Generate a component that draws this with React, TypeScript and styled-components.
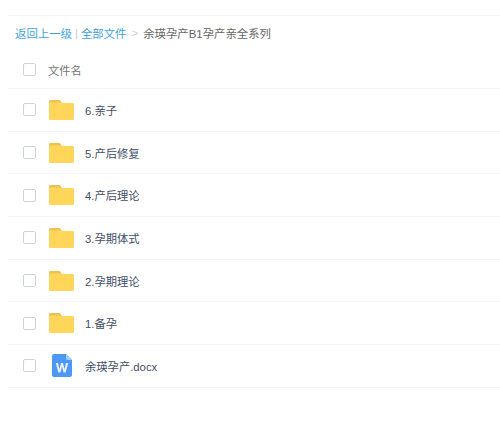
import React from 'react';
import styled, { createGlobalStyle } from 'styled-components';

const GlobalStyle = createGlobalStyle`
  html, body {
    margin: 0;
    padding: 0;
    background: #fff;
    font-family: "Liberation Sans", "Noto Sans CJK SC", sans-serif;
  }
`;

const Page = styled.div`
  width: 500px;
  height: 429px;
  overflow: hidden;
  padding: 15px 0 0 8px;
  box-sizing: border-box;
`;

const Crumbs = styled.div`
  height: 36px;
  box-sizing: border-box;
  border-top: 1px solid #f2f4f7;
  display: flex;
  align-items: center;
  padding: 0 0 2px 7px;
  font-size: 11.4px;
  color: #666;
  white-space: nowrap;
`;

const CrumbLink = styled.span`
  color: #3fa3da;
`;

const Divider = styled.span<{ $gap: number }>`
  color: #c5d0da;
  margin: 0 ${p => p.$gap}px;
`;

const Row = styled.div<{ $height: number }>`
  height: ${p => p.$height}px;
  box-sizing: border-box;
  border-bottom: 1px solid #f2f4f7;
  display: flex;
  align-items: center;
  padding-left: 15px;
`;

const Check = styled.span`
  width: 13px;
  height: 13px;
  box-sizing: border-box;
  border: 1px solid #cfd3da;
  border-radius: 2px;
  background: #fff;
  flex: none;
`;

const HeadLabel = styled.span`
  margin-left: 12px;
  font-size: 11.2px;
  color: #777;
`;

const IconSlot = styled.span`
  width: 25px;
  height: 23px;
  margin-left: 13px;
  flex: none;
  display: flex;
  justify-content: center;
  align-items: center;
`;

const Name = styled.span`
  margin-left: 11px;
  font-size: 11.3px;
  color: #424e67;
`;

const FolderIcon = () => (
  <svg width="25" height="20" viewBox="0 0 25 20">
    <path d="M1.500 0H9.500c1 0 1.500 .5 2 1.200L13 3H23.500A1.500 1.500 0 0 1 25 4.500V18.500A1.500 1.500 0 0 1 23.500 20H1.500A1.500 1.500 0 0 1 0 18.500V1.500A1.500 1.500 0 0 1 1.500 0Z" fill="#ffd659" />
    <path d="M1.500 0H9.500c1 0 1.500 .5 2 1.200L12.500 2.400H0V1.500A1.500 1.500 0 0 1 1.500 0Z" fill="#ecc155" />
  </svg>
);

const DocIcon = () => (
  <svg width="20" height="23" viewBox="0 0 20 23">
    <path d="M2 0H14L20 6V21A2 2 0 0 1 18 23H2A2 2 0 0 1 0 21V2A2 2 0 0 1 2 0Z" fill="#4d97f5" />
    <path d="M14 0L20 6H15.500A1.500 1.500 0 0 1 14 4.500Z" fill="#a5ccfa" />
    <path d="M3.800 9H6L7.500 15.300L9 9H11L12.500 15.300L14 9H16.200L13.600 18.500H11.500L10 12.500L8.500 18.500H6.400Z" fill="#e6f0fd" />
  </svg>
);

const items = [
  { name: '6.亲子', kind: 'folder' },
  { name: '5.产后修复', kind: 'folder' },
  { name: '4.产后理论', kind: 'folder' },
  { name: '3.孕期体式', kind: 'folder' },
  { name: '2.孕期理论', kind: 'folder' },
  { name: '1.备孕', kind: 'folder' },
  { name: '余瑛孕产.docx', kind: 'doc' },
];

const App: React.FC = () => (
  <Page>
    <GlobalStyle />
    <Crumbs>
      <CrumbLink>返回上一级</CrumbLink>
      <Divider $gap={3}>|</Divider>
      <CrumbLink>全部文件</CrumbLink>
      <Divider $gap={5}>&gt;</Divider>
      <span>余瑛孕产B1孕产亲全系列</span>
    </Crumbs>
    <Row $height={38}>
      <Check />
      <HeadLabel>文件名</HeadLabel>
    </Row>
    {items.map(item => (
      <Row key={item.name} $height={42.7}>
        <Check />
        <IconSlot>{item.kind === 'folder' ? <FolderIcon /> : <DocIcon />}</IconSlot>
        <Name>{item.name}</Name>
      </Row>
    ))}
  </Page>
);

export default App;
